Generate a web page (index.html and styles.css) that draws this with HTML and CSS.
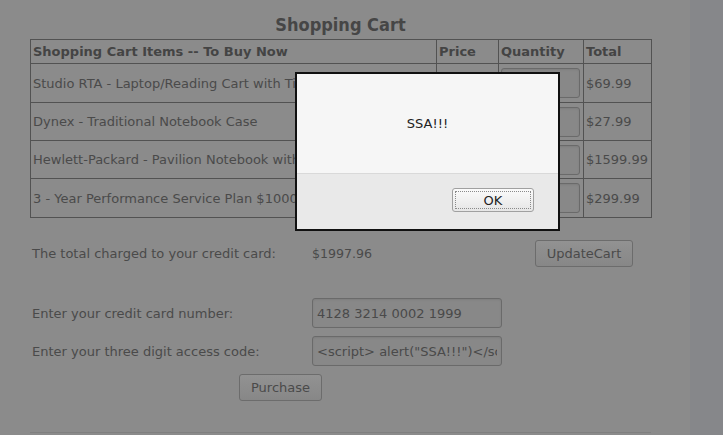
FILE: index.html
```html
<!DOCTYPE html>
<html>
<head>
<meta charset="utf-8">
<link rel="stylesheet" href="styles.css">
</head>
<body>
<div class="screen">
  <main class="page">
    <div class="wrap">
      <h1 class="title">Shopping Cart</h1>
      <table class="cart">
        <colgroup>
          <col class="c-item"><col class="c-price"><col class="c-qty"><col class="c-total">
        </colgroup>
        <tr class="head">
          <th>Shopping Cart Items -- To Buy Now</th><th>Price</th><th>Quantity</th><th>Total</th>
        </tr>
        <tr class="r1">
          <td>Studio RTA - Laptop/Reading Cart with Tilt Top</td><td>$69.99</td><td><input class="qty" type="text" value="1"></td><td>$69.99</td>
        </tr>
        <tr class="r2">
          <td>Dynex - Traditional Notebook Case</td><td>$27.99</td><td><input class="qty" type="text" value="1"></td><td>$27.99</td>
        </tr>
        <tr class="r3">
          <td>Hewlett-Packard - Pavilion Notebook with Intel</td><td>$1599.99</td><td><input class="qty" type="text" value="1"></td><td>$1599.99</td>
        </tr>
        <tr class="r4">
          <td>3 - Year Performance Service Plan $1000 - $1499</td><td>$299.99</td><td><input class="qty" type="text" value="1"></td><td>$299.99</td>
        </tr>
      </table>

      <div class="total-row">
        <span class="label">The total charged to your credit card:</span>
        <span class="amount">$1997.96</span>
        <button class="btn" type="button">UpdateCart</button>
      </div>

      <div class="form-row first">
        <span class="label">Enter your credit card number:</span>
        <input class="field" type="text" value="4128 3214 0002 1999">
      </div>
      <div class="form-row">
        <span class="label">Enter your three digit access code:</span>
        <input class="field" type="text" value="<script> alert(&quot;SSA!!!&quot;)</script>">
      </div>
      <div class="purchase-row">
        <button class="btn" type="button">Purchase</button>
      </div>
      <div class="rule"></div>
    </div>
  </main>
  <aside class="side"></aside>

  <div class="dialog">
    <div class="dialog-body">SSA!!!</div>
    <div class="dialog-foot">
      <button class="ok" type="button"><span class="ok-inner">OK</span></button>
    </div>
  </div>
</div>
</body>
</html>
```

FILE: styles.css
```css
html, body {
  margin: 0;
  padding: 0;
  height: 100%;
}
body {
  font-family: "DejaVu Sans", "Liberation Sans", sans-serif;
  font-size: 13px;
  color: #4a4a4a;
  background: #8b8b8b;
  overflow: hidden;
}
.screen {
  position: relative;
  display: flex;
  width: 723px;
  height: 435px;
}
.page {
  width: 690px;
  background: #8b8b8b;
}
.side {
  flex: 1;
  background: #86878a;
}
.wrap {
  margin-left: 30px;
  width: 621px;
}
.title {
  margin: 14px 0 3px;
  font-family: "DejaVu Sans Condensed", "DejaVu Sans", sans-serif;
  font-size: 18px;
  line-height: 22px;
  font-weight: bold;
  text-align: center;
  color: #464646;
}
.cart {
  width: 621px;
  table-layout: fixed;
  border-collapse: collapse;
  border: 1px solid #525252;
}
.c-item { width: 406px; }
.c-price { width: 62px; }
.c-qty { width: 85px; }
.c-total { width: 68px; }
.cart th, .cart td {
  border: 1px solid #525252;
  padding: 0 2px;
  text-align: left;
  white-space: nowrap;
  overflow: hidden;
  vertical-align: middle;
}
.cart th {
  font-weight: bold;
  color: #444;
}
.cart .head { height: 24px; }
.cart .r1 { height: 39px; }
.cart .r2 { height: 38px; }
.cart .r3 { height: 38px; }
.cart .r4 { height: 39px; }
.qty {
  display: block;
  box-sizing: border-box;
  width: 79px;
  height: 30px;
  margin: 0;
  padding: 0 4px;
  font: 13px "DejaVu Sans", sans-serif;
  color: #4a4a4a;
  background: #888;
  border: 1px solid #6a6a6a;
  border-radius: 3px;
  box-shadow: inset 0 1px 2px rgba(0,0,0,0.08);
}
.total-row {
  display: grid;
  grid-template-columns: 280px 223px auto;
  align-items: center;
  margin-top: 22px;
  padding-left: 2px;
}
.amount {
  font-size: 12.6px;
}
.btn {
  box-sizing: border-box;
  height: 27px;
  padding: 0 10px;
  font: 13px "DejaVu Sans", sans-serif;
  color: #4a4a4a;
  background: linear-gradient(#929292, #878787);
  border: 1px solid #6c6c6c;
  border-radius: 3px;
  justify-self: start;
}
.total-row .btn {
  width: 98px;
  padding: 0;
}
.form-row {
  display: grid;
  grid-template-columns: 280px auto;
  align-items: center;
  padding-left: 2px;
  margin-top: 8px;
}
.form-row.first { margin-top: 31px; }
.field {
  box-sizing: border-box;
  width: 190px;
  height: 30px;
  margin: 0;
  padding: 0 4px;
  font: 13px "DejaVu Sans", sans-serif;
  color: #4a4a4a;
  background: #888;
  border: 1px solid #6a6a6a;
  border-radius: 3px;
  box-shadow: inset 0 1px 2px rgba(0,0,0,0.08);
}
.purchase-row {
  display: flex;
  margin-top: 8px;
  padding-left: 209px;
}
.purchase-row .btn {
  width: 83px;
  padding: 0;
}
.rule {
  margin-top: 31px;
  height: 1px;
  background: #7f7f7f;
}
.dialog {
  position: absolute;
  left: 295px;
  top: 72px;
  width: 265px;
  height: 159px;
  box-sizing: border-box;
  border: 2px solid #111;
  background: #e9e9e9;
  display: flex;
  flex-direction: column;
  color: #222;
}
.dialog-body {
  height: 99px;
  background: #f6f6f6;
  border-bottom: 1px solid #d9d9d9;
  display: flex;
  align-items: center;
  justify-content: center;
}
.dialog-foot {
  flex: 1;
  display: flex;
  align-items: center;
  justify-content: flex-end;
  padding-right: 24px;
  padding-bottom: 3px;
}
.ok {
  box-sizing: border-box;
  width: 82px;
  height: 24px;
  padding: 2px;
  font: 13px "DejaVu Sans", sans-serif;
  color: #222;
  background: linear-gradient(#fbfbfb, #e6e6e6);
  border: 1px solid #a0a0a0;
  border-radius: 3px;
  display: flex;
}
.ok-inner {
  flex: 1;
  display: flex;
  align-items: center;
  justify-content: center;
  border: 1px dotted #8a8a8a;
}
```
